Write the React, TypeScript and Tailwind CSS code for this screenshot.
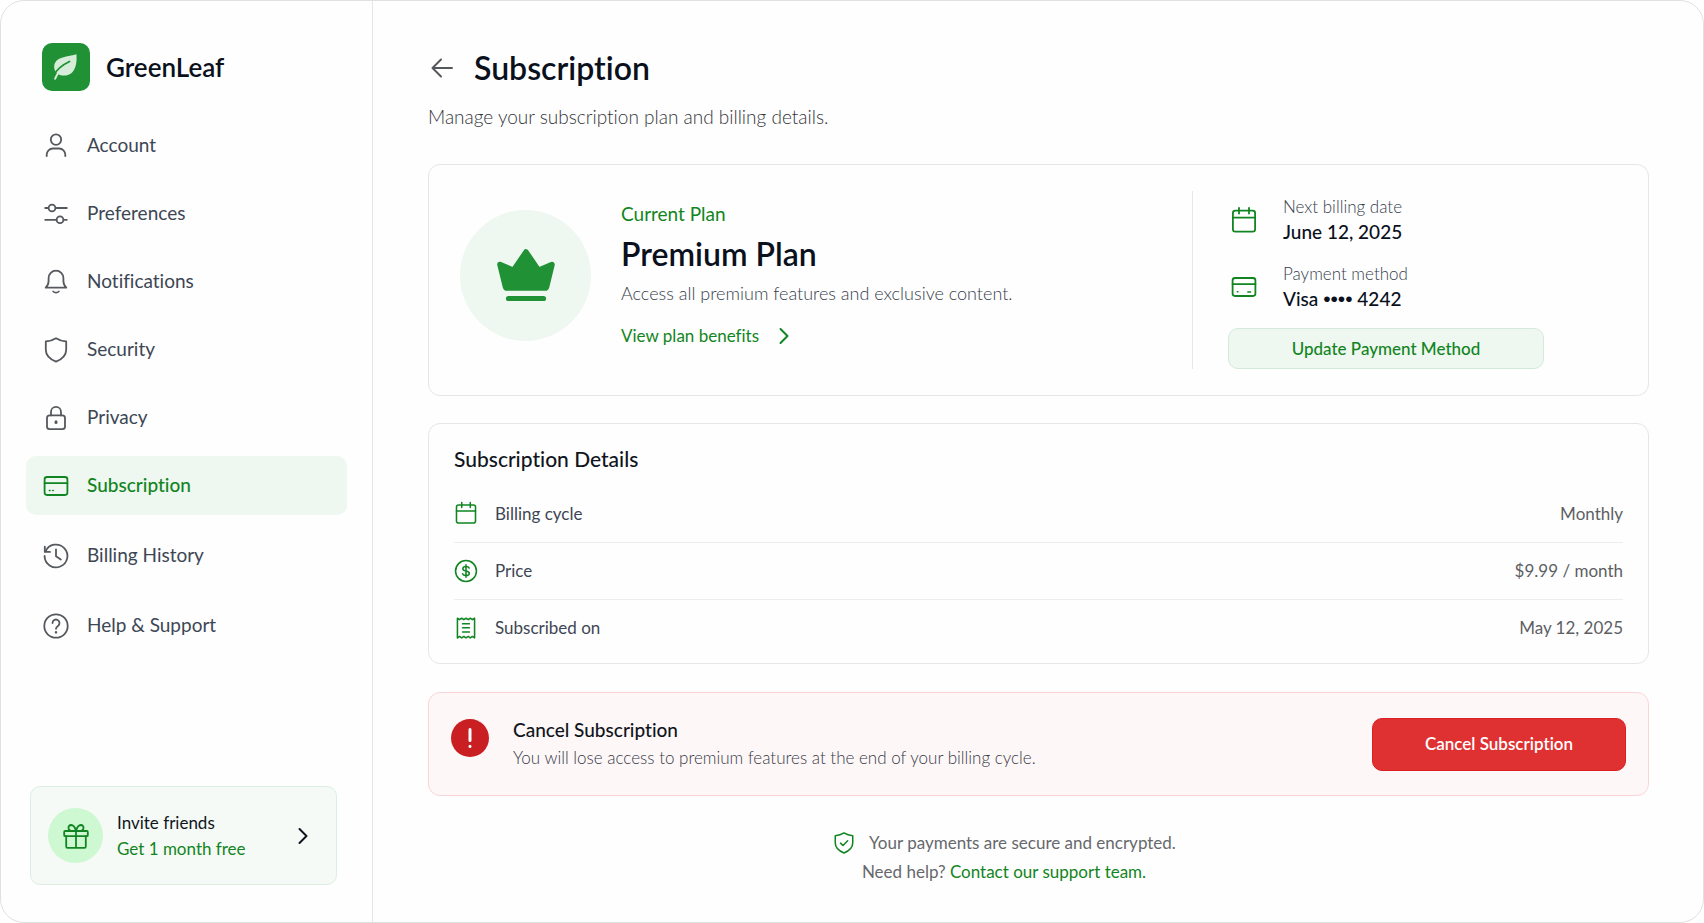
import type { ReactNode } from "react";

type IconProps = { className?: string; children: ReactNode };

function Icon({ className = "size-7", children }: IconProps) {
  return (
    <svg
      viewBox="0 0 28 28"
      className={`shrink-0 ${className}`}
      fill="none"
      stroke="currentColor"
      strokeWidth="1.8"
      strokeLinecap="round"
      strokeLinejoin="round"
      aria-hidden="true"
    >
      {children}
    </svg>
  );
}

const UserIcon = () => (
  <Icon>
    <circle cx="14" cy="7.6" r="5.2" />
    <path d="M4.7 24v-1.3a6.2 6.2 0 0 1 6.2-6.2h6.2a6.2 6.2 0 0 1 6.2 6.2V24" />
  </Icon>
);

const SlidersIcon = () => (
  <Icon>
    <path d="M3.2 8h3.2M13.6 8h11.2M3.2 19.8h11.4M21.6 19.8h3.2" />
    <circle cx="10" cy="8" r="3.4" />
    <circle cx="18" cy="19.8" r="3.4" />
  </Icon>
);

const BellIcon = () => (
  <Icon>
    <path d="M3.700 19.700c1.900-1.700 2.900-3.600 2.900-6.600V10a7.400 7.400 0 0 1 14.800 0v3.100c0 3 1 4.900 2.900 6.600z" />
    <path d="M11.200 23.500c1.500 1.600 4.100 1.600 5.600 0" />
  </Icon>
);

const ShieldIcon = () => (
  <Icon>
    <path d="M14 2.300c2.900 1.900 6.200 2.900 10.200 3.200v8.300c0 5.500-4 9.400-10.200 11.900C7.800 23.200 3.800 19.300 3.800 13.800V5.500C7.800 5.200 11.100 4.200 14 2.300z" />
  </Icon>
);

const LockIcon = () => (
  <Icon>
    <rect x="5" y="11.400" width="18" height="13.800" rx="2.600" />
    <path d="M9 11.400V7.900a5 5 0 0 1 10 0v3.500" />
    <path d="M14 17.800v.8" strokeWidth="3" />
  </Icon>
);

const CardIcon = ({ wide = false, className }: { wide?: boolean; className?: string }) => (
  <Icon className={className}>
    <rect x="2.600" y="5" width="22.800" height="18" rx="2.400" />
    <path d="M2.600 11.200h22.800" />
    <path d={wide ? "M7.300 18.800h.6M17.800 19h2.800" : "M7.300 18.500h.8M10.700 18.500h.6"} strokeWidth="1.400" />
  </Icon>
);

const HistoryIcon = () => (
  <Icon>
    <path d="M3.600 9.300A11.400 11.400 0 1 1 2.600 14" />
    <path d="M2.800 4.600v5.300H8" />
    <path d="M14 7.400v6.900l4.800 3.200" />
  </Icon>
);

const HelpIcon = () => (
  <Icon>
    <circle cx="14" cy="14" r="11.700" />
    <path d="M10.500 11a3.500 3.500 0 1 1 5.500 2.900c-1.300.9-2 1.600-2 2.900" />
    <path d="M14 20.300v.1" strokeWidth="2.400" />
  </Icon>
);

const CalendarIcon = ({ className }: { className?: string }) => (
  <Icon className={className}>
    <rect x="2.900" y="4.600" width="22.200" height="21" rx="2.400" />
    <path d="M2.900 11.600h22.200M9 1.800v5.800M19 1.800v5.800" />
  </Icon>
);

const DollarIcon = ({ className }: { className?: string }) => (
  <Icon className={className}>
    <circle cx="14" cy="14" r="12.200" />
    <path d="M14 6.800v14.400M17.700 10.600c-.5-1.300-1.900-1.900-3.700-1.900-2.200 0-3.700.9-3.700 2.600 0 3.800 7.600 1.600 7.600 5.400 0 1.700-1.600 2.700-3.900 2.700-2 0-3.500-.8-4-2.200" />
  </Icon>
);

const ReceiptIcon = ({ className }: { className?: string }) => (
  <Icon className={className}>
    <path d="M4 2.600l2.500 1.600L9 2.600l2.500 1.600L14 2.600l2.500 1.600L19 2.600l2.500 1.600L24 2.600v23l-2.500-1.700-2.500 1.700-2.500-1.700-2.500 1.700-2.500-1.700-2.500 1.700-2.500-1.700L4 25.600z" />
    <path d="M10 9h8M10 13.800h8M10 18.600h8" />
  </Icon>
);

const GiftIcon = () => (
  <Icon>
    <rect x="2.200" y="9" width="23.600" height="5.200" rx="1" />
    <path d="M4.200 14.200v10.200a1.400 1.400 0 0 0 1.400 1.400h16.800a1.400 1.400 0 0 0 1.400-1.400V14.200M14 9v16.800" />
    <path d="M14 9C13 5 10.900 3 9 3a2.600 2.600 0 0 0-2.500 2.800C6.500 7.800 8.200 9 10.500 9M14 9c1-4 3.100-6 5-6a2.600 2.600 0 0 1 2.500 2.800c0 2-1.700 3.200-4 3.200" />
  </Icon>
);

const Chevron = ({ className }: { className?: string }) => (
  <svg viewBox="0 0 10 18" className={`h-[18px] w-[10px] shrink-0 ${className ?? ""}`} fill="none" stroke="currentColor" strokeWidth="2" strokeLinecap="round" strokeLinejoin="round" aria-hidden="true">
    <path d="M1.500 2l7 7-7 7" />
  </svg>
);

const LeafLogo = () => (
  <svg viewBox="0 0 26 28" className="h-7 w-[26px]" fill="none" strokeLinecap="round" aria-hidden="true">
    <path d="M23.400 1.200C24.200 9 23 22.600 11 22.600 4 22.600 1 18 1.200 13.500 1.800 3.500 14 4 23.400 1.200z" fill="#d6eed9" />
    <path d="M1 21.500C4.500 15.500 9.500 11.800 16.500 8.400" stroke="#209135" strokeWidth="1.700" />
    <path d="M2.100 25.800C3 23 4.500 20.500 7.500 17.800" stroke="#d6eed9" strokeWidth="2" />
  </svg>
);

const Crown = () => (
  <svg viewBox="0 0 60 54" className="h-[54px] w-[60px]" fill="#209135" stroke="#209135" strokeLinejoin="round" strokeLinecap="round" aria-hidden="true">
    <path d="M30 4L42.500 22.200 56 16.500 50.500 39a1.500 1.500 0 0 1-1.500 1.100H11A1.500 1.500 0 0 1 9.500 39L4 16.500 17.500 22.200z" strokeWidth="5.500" />
    <path d="M12.500 50.500h35" strokeWidth="5.200" />
  </svg>
);

type NavEntry = { label: string; icon: ReactNode; active?: boolean };

const settingsNav: NavEntry[] = [
  { label: "Account", icon: <UserIcon /> },
  { label: "Preferences", icon: <SlidersIcon /> },
  { label: "Notifications", icon: <BellIcon /> },
  { label: "Security", icon: <ShieldIcon /> },
  { label: "Privacy", icon: <LockIcon /> },
  { label: "Subscription", icon: <CardIcon />, active: true },
];

const supportNav: NavEntry[] = [
  { label: "Billing History", icon: <HistoryIcon /> },
  { label: "Help & Support", icon: <HelpIcon /> },
];

function NavItem({ label, icon, active }: NavEntry) {
  return (
    <li>
      <a
        href="#"
        aria-current={active ? "page" : undefined}
        className={`flex h-[59px] items-center gap-[17px] rounded-[10px] px-4 text-[19px] ${
          active ? "bg-[#eff7f1] font-medium text-[#118522]" : "text-[#3d4654]"
        }`}
      >
        <span className={active ? "text-[#118522]" : "text-[#55585d]"}>{icon}</span>
        {label}
      </a>
    </li>
  );
}

function Sidebar() {
  return (
    <aside className="flex w-[372px] shrink-0 flex-col border-r border-[#e5e6e8] pt-[42px] pr-[25px] pb-[37px] pl-[25px]">
      <div className="flex items-center gap-4 pl-4">
        <div className="flex size-12 items-center justify-center rounded-[10px] bg-[#209135]">
          <LeafLogo />
        </div>
        <span className="text-[26px] leading-9 font-semibold text-[#0a101c]">GreenLeaf</span>
      </div>
      <nav aria-label="Settings" className="mt-[25px]">
        <ul className="flex flex-col gap-[9px]">
          {settingsNav.map((item) => (
            <NavItem key={item.label} {...item} />
          ))}
        </ul>
        <ul className="mt-[11px] flex flex-col gap-[11px]">
          {supportNav.map((item) => (
            <NavItem key={item.label} {...item} />
          ))}
        </ul>
      </nav>
      <a href="#" className="mt-auto mr-[10px] ml-1 flex h-[99px] items-center rounded-[10px] border border-[#dcefe1] bg-[#f5faf6] pr-[28px] pl-[17px]">
        <span className="flex size-[55px] items-center justify-center rounded-full bg-[#cdf8d2] text-[#118522]">
          <GiftIcon />
        </span>
        <span className="ml-[14px] flex flex-col text-[17px] leading-[26px]">
          <span className="text-[#10151d]">Invite friends</span>
          <span className="text-[#118522]">Get 1 month free</span>
        </span>
        <Chevron className="ml-auto text-[#10151d]" />
      </a>
    </aside>
  );
}

function PlanFact({ icon, label, value }: { icon: ReactNode; label: string; value: ReactNode }) {
  return (
    <div className="flex items-center gap-[25px] pl-[2px] text-[#118522]">
      {icon}
      <dl>
        <dt className="text-[17px] leading-6 font-light text-[#363d4c]">{label}</dt>
        <dd className="text-[19px] leading-[25px] font-medium text-[#0a101c]">{value}</dd>
      </dl>
    </div>
  );
}

function PlanCard() {
  return (
    <section className="mt-[33px] flex items-center rounded-xl border border-[#e5e6e8] py-[26px] pr-[104px] pl-[31px]">
      <div className="flex flex-1 items-center pb-[10px]">
        <div className="flex size-[131px] shrink-0 items-center justify-center rounded-full bg-[#eff7f1]">
          <Crown />
        </div>
        <div className="ml-[30px]">
          <p className="text-[19px] leading-7 text-[#118522]">Current Plan</p>
          <h2 className="mt-1 text-[32px] leading-[44px] font-semibold text-[#0a101c]">Premium Plan</h2>
          <p className="mt-[3px] text-[18px] leading-7 font-light text-[#363d4c]">Access all premium features and exclusive content.</p>
          <a href="#" className="mt-[15px] flex items-center gap-5 text-[17px] leading-7 text-[#118522]">
            View plan benefits
            <Chevron />
          </a>
        </div>
      </div>
      <div className="w-[352px] border-l border-[#e5e6e8] pl-[35px]">
        <div className="flex flex-col gap-[18px] pt-1">
          <PlanFact icon={<CalendarIcon />} label="Next billing date" value="June 12, 2025" />
          <PlanFact
            icon={<CardIcon wide />}
            label="Payment method"
            value={
              <>
                Visa <span className="font-['Liberation_Sans',sans-serif] text-[21px] leading-none">••••</span> 4242
              </>
            }
          />
        </div>
        <button type="button" className="mt-[17px] h-[41px] w-full rounded-[10px] border border-[#d3eadb] bg-[#eff7f1] text-[17px] font-medium text-[#118522]">
          Update Payment Method
        </button>
      </div>
    </section>
  );
}

const details = [
  { label: "Billing cycle", value: "Monthly", icon: <CalendarIcon className="size-6" /> },
  { label: "Price", value: "$9.99 / month", icon: <DollarIcon className="size-6" /> },
  { label: "Subscribed on", value: "May 12, 2025", icon: <ReceiptIcon className="size-6" /> },
];

function DetailsCard() {
  return (
    <section className="mt-[27px] rounded-xl border border-[#e5e6e8] px-[25px] pt-[21px] pb-[7px]">
      <h2 className="text-[21px] leading-7 font-medium text-[#10151d]">Subscription Details</h2>
      <table className="mt-3 w-full text-[17px]">
        <tbody className="divide-y divide-[#ededee]">
          {details.map(({ label, value, icon }) => (
            <tr key={label} className="h-[57px]">
              <th scope="row" className="text-left font-normal text-[#3d4654]">
                <span className="flex items-center gap-[17px]">
                  <span className="text-[#118522]">{icon}</span>
                  {label}
                </span>
              </th>
              <td className="text-right text-[#5d5f63]">{value}</td>
            </tr>
          ))}
        </tbody>
      </table>
    </section>
  );
}

function CancelCard() {
  return (
    <section className="mt-7 flex items-center rounded-xl border border-[#fbd5d6] bg-[#fef7f7] py-[23px] pr-[22px] pl-[22px]">
      <svg viewBox="0 0 38 38" className="mb-3 size-[38px] shrink-0" strokeLinecap="round" aria-hidden="true">
        <circle cx="19" cy="19" r="19" fill="#c91f22" />
        <path d="M19 10.500v11M19 27.200v.3" stroke="#fff" strokeWidth="3" />
      </svg>
      <div className="ml-6 flex-1">
        <h2 className="text-[19px] leading-7 font-medium text-[#10151d]">Cancel Subscription</h2>
        <p className="text-[17px] leading-7 font-light text-[#363a48]">You will lose access to premium features at the end of your billing cycle.</p>
      </div>
      <button type="button" className="h-[53px] w-[254px] rounded-[10px] border border-[#dc1f23] bg-[#df3032] text-[17px] font-semibold text-white">
        Cancel Subscription
      </button>
    </section>
  );
}

export default function App() {
  return (
    <div className="flex min-h-screen rounded-[24px] border border-[#dfe0e2] bg-[#fefefe] font-['Lato','Liberation_Sans',sans-serif] [font-variant-ligatures:none]">
      <Sidebar />
      <main className="flex-1 pt-[45px] pr-[54px] pb-6 pl-[55px]">
        <header>
          <div className="flex items-center gap-5">
            <button type="button" aria-label="Go back" className="pl-[2px] text-[#55585d]">
              <svg viewBox="0 0 24 24" className="size-6" fill="none" stroke="currentColor" strokeWidth="2" strokeLinecap="round" strokeLinejoin="round" aria-hidden="true">
                <path d="M22 12H2.500M11 3.500L2.500 12l8.500 8.500" />
              </svg>
            </button>
            <h1 className="text-[32px] leading-[44px] font-semibold text-[#0a101c]">Subscription</h1>
          </div>
          <p className="mt-[13px] text-[19px] leading-7 font-light text-[#33353a]">Manage your subscription plan and billing details.</p>
        </header>
        <PlanCard />
        <DetailsCard />
        <CancelCard />
        <footer className="mt-8 flex flex-col items-center pr-[69px] text-[17px] leading-[29px] text-[#66686c]">
          <p className="flex items-center gap-[13px]">
            <span className="text-[#118522]">
              <Icon className="size-6">
                <path d="M14 2.300c2.900 1.900 6.200 2.900 10.200 3.200v8.300c0 5.500-4 9.400-10.200 11.900C7.800 23.200 3.800 19.300 3.800 13.800V5.500C7.800 5.200 11.100 4.200 14 2.300z" />
                <path d="M10 14.200l2.800 2.700 5.500-5.500" />
              </Icon>
            </span>
            Your payments are secure and encrypted.
          </p>
          <p>
            Need help?{" "}
            <a href="#" className="text-[#118522]">
              Contact our support team.
            </a>
          </p>
        </footer>
      </main>
    </div>
  );
}
